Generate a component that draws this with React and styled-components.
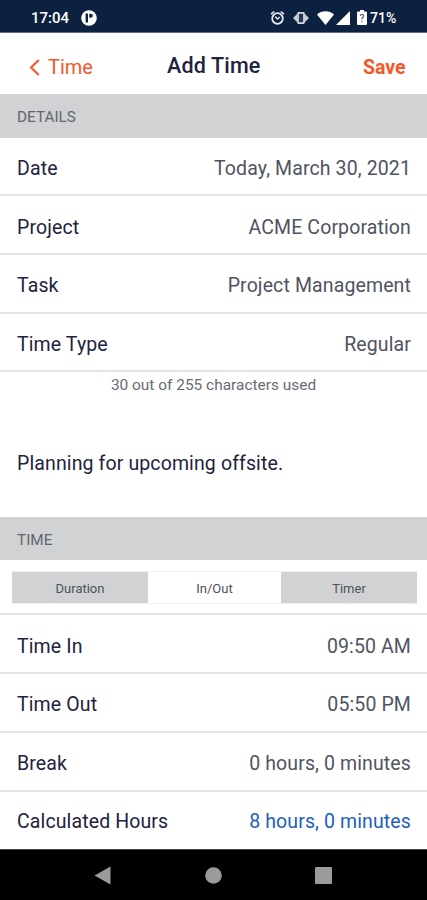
import styled, { createGlobalStyle } from "styled-components";
import { useState } from "react";

const GlobalStyle = createGlobalStyle`
  * {
    box-sizing: border-box;
  }
  body {
    margin: 0;
    background-color: #fff;
    font-family: Roboto, sans-serif;
  }
`;

const Screen = styled.div`
  width: 427px;
  height: 900px;
  display: flex;
  flex-direction: column;
  overflow: hidden;
  background-color: #fff;
  color: #22223f;
`;

const StatusBar = styled.div`
  height: 33px;
  flex-shrink: 0;
  padding: 3px 29px 0 31px;
  display: flex;
  align-items: center;
  background-color: #0b213f;
  border-bottom: 1px solid #5f6b7c;
  color: #fff;
`;

const Clock = styled.span`
  width: 50px;
  font-size: 15px;
  font-weight: 500;
`;

const StatusIcons = styled.div`
  margin-left: auto;
  display: flex;
  align-items: center;
`;

const Icon = styled.svg`
  display: block;
  flex-shrink: 0;
  margin-right: ${(props) => props.$gap || 0}px;
`;

const Battery = styled.span`
  width: 28px;
  font-size: 14px;
  font-weight: 500;
  white-space: nowrap;
`;

const Header = styled.header`
  height: 61px;
  flex-shrink: 0;
  padding: 0 21.5px 0 29px;
  display: grid;
  grid-template-columns: 1fr auto 1fr;
  align-items: center;
`;

const Back = styled.button`
  padding: 7px 0 0;
  border: 0;
  background: none;
  display: flex;
  align-items: center;
  gap: 8px;
  font: 400 20px/24px Roboto, sans-serif;
  color: #f1592a;
`;

const Title = styled.h1`
  margin: 0;
  padding: 4px 7px 0 0;
  font-size: 21.5px;
  font-weight: 500;
  line-height: 24px;
  letter-spacing: 0.15px;
`;

const Save = styled.button`
  justify-self: end;
  padding: 8px 0 0;
  border: 0;
  background: none;
  font: 700 19.5px/24px Roboto, sans-serif;
  color: #f1592a;
`;

const SectionTitle = styled.h2`
  height: 43.5px;
  flex-shrink: 0;
  margin: 0;
  padding: 2px 17px 0;
  display: flex;
  align-items: center;
  background-color: #d0d2d3;
  color: #62676f;
  font-size: 15.3px;
  font-weight: 400;
`;

const Row = styled.div`
  height: ${(props) => (props.$last ? "57.5px" : "58.7px")};
  flex-shrink: 0;
  padding: ${(props) => (props.$last ? "3px" : "5px")} 16px 0 17px;
  display: flex;
  align-items: center;
  justify-content: space-between;
  border-bottom: ${(props) => (props.$last ? "0" : "2px solid #e3e4e6")};
  font-size: 19.5px;
  letter-spacing: 0.12px;
`;

const Label = styled.span``;

const Value = styled.span`
  color: ${(props) => (props.$total ? "#2160b8" : "#505362")};
`;

const Notes = styled.div`
  height: 144.7px;
  flex-shrink: 0;
  display: flex;
  flex-direction: column;
`;

const Counter = styled.span`
  padding-top: 4px;
  text-align: center;
  font-size: 15.4px;
  line-height: 18px;
  letter-spacing: 0.02px;
  color: #676a73;
`;

const NoteText = styled.p`
  margin: 0;
  padding: 58px 17px 0;
  font-size: 19.5px;
  line-height: 24px;
  letter-spacing: 0.12px;
`;

const TabBar = styled.div`
  height: 55px;
  flex-shrink: 0;
  padding: 11px 10px 10px 12px;
  border-bottom: 2px solid #e3e4e6;
`;

const Tabs = styled.div`
  height: 33px;
  display: grid;
  grid-template-columns: 136px 133px 136px;
  border-radius: 2px;
  overflow: hidden;
`;

const Tab = styled.button`
  padding: 1px 0 0;
  border: 0;
  border-top: 1px solid #eff0f1;
  border-bottom: 1px solid #eff0f1;
  background-color: ${(props) => (props.$active ? "#fff" : "#d0d2d3")};
  color: #4d525c;
  font: 400 13px/15px Roboto, sans-serif;
`;

const NavBar = styled.nav`
  flex: 1;
  padding: 0 95px 0 94px;
  display: flex;
  align-items: center;
  justify-content: space-between;
  background-color: #000;
  border-top: 1px solid #444;
`;

const details = [
  { label: "Date", value: "Today, March 30, 2021" },
  { label: "Project", value: "ACME Corporation" },
  { label: "Task", value: "Project Management" },
  { label: "Time Type", value: "Regular" },
];

const times = [
  { label: "Time In", value: "09:50 AM" },
  { label: "Time Out", value: "05:50 PM" },
  { label: "Break", value: "0 hours, 0 minutes" },
  { label: "Calculated Hours", value: "8 hours, 0 minutes", total: true },
];

const AddTime = () => {
  const [mode, setMode] = useState("In/Out");

  return (
    <Screen>
      <StatusBar>
        <Clock>17:04</Clock>
        <Icon width="16" height="16" viewBox="0 0 16 16">
          <circle cx="8" cy="8" r="7.8" fill="#fff" />
          <path d="M5.8 3.5v9" fill="none" stroke="#0b213f" strokeWidth="2.4" />
          <path d="M8.3 3.800h1.500a2 2 0 0 1 0 4H8.300z" fill="#0b213f" />
        </Icon>
        <StatusIcons>
          <Icon $gap={8} width="15" height="16" viewBox="0 0 15 16" fill="none" stroke="#e6eaf0">
            <circle cx="7.5" cy="8.5" r="5.3" strokeWidth="1.8" />
            <path d="M1 4.2 4.2 1.5M14 4.2l-3.2-2.7" strokeWidth="1.6" />
            <path d="m5.2 6.5 2.300 2.500 2.300-2" strokeWidth="1.300" />
          </Icon>
          <Icon $gap={8} width="16" height="12" viewBox="0 0 16 12">
            <path d="M0 6 4.500 1.500v9zM16 6l-4.500-4.500v9z" fill="#c9cfd8" />
            <rect x="5" y=".8" width="6" height="10.400" rx="1" fill="#25385a" stroke="#d5dae2" strokeWidth="1.700" />
          </Icon>
          <Icon $gap={2} width="17" height="14" viewBox="0 0 17 14">
            <path d="M8.5 14 0 3.4C2.4 1.2 5.2.2 8.5.2s6.100 1 8.500 3.200z" fill="#fff" />
          </Icon>
          <Icon $gap={7} width="14" height="14" viewBox="0 0 14 14">
            <path d="M14 0v14H0z" fill="#fff" />
          </Icon>
          <Icon $gap={3} width="10" height="15" viewBox="0 0 10 15">
            <path d="M3 0h4v1.500h2q1 0 1 1V14q0 1-1 1H1q-1 0-1-1V2.500q0-1 1-1h2z" fill="#fff" />
            <path d="M3.300 5.800q.2-1.500 1.700-1.500t1.700 1.500Q6.700 7 5 8v1.600M5 10.800v1.300" fill="none" stroke="#53627a" strokeWidth="1.200" />
          </Icon>
          <Battery>71%</Battery>
        </StatusIcons>
      </StatusBar>

      <Header>
        <Back>
          <Icon width="11" height="17" viewBox="0 0 11 17">
            <path d="M9.800 1 2 8.500 9.800 16" fill="none" stroke="#f1592a" strokeWidth="2.100" />
          </Icon>
          Time
        </Back>
        <Title>Add Time</Title>
        <Save>Save</Save>
      </Header>

      <SectionTitle>DETAILS</SectionTitle>
      {details.map((item) => (
        <Row key={item.label}>
          <Label>{item.label}</Label>
          <Value>{item.value}</Value>
        </Row>
      ))}

      <Notes>
        <Counter>30 out of 255 characters used</Counter>
        <NoteText>Planning for upcoming offsite.</NoteText>
      </Notes>

      <SectionTitle>TIME</SectionTitle>
      <TabBar>
        <Tabs>
          {["Duration", "In/Out", "Timer"].map((name) => (
            <Tab key={name} $active={mode === name} onClick={() => setMode(name)}>
              {name}
            </Tab>
          ))}
        </Tabs>
      </TabBar>
      {times.map((item) => (
        <Row key={item.label} $last={item.total}>
          <Label>{item.label}</Label>
          <Value $total={item.total}>{item.value}</Value>
        </Row>
      ))}

      <NavBar>
        <Icon width="17" height="19" viewBox="0 0 17 19">
          <path d="M.5 9.500 16.500.5v18z" fill="#9b9b9b" />
        </Icon>
        <Icon width="17" height="17" viewBox="0 0 17 17">
          <circle cx="8.500" cy="8.500" r="8.300" fill="#9b9b9b" />
        </Icon>
        <Icon width="17" height="17" viewBox="0 0 17 17">
          <rect width="17" height="17" rx="1" fill="#9b9b9b" />
        </Icon>
      </NavBar>
    </Screen>
  );
};

const App = () => (
  <>
    <GlobalStyle />
    <AddTime />
  </>
);

export default App;
